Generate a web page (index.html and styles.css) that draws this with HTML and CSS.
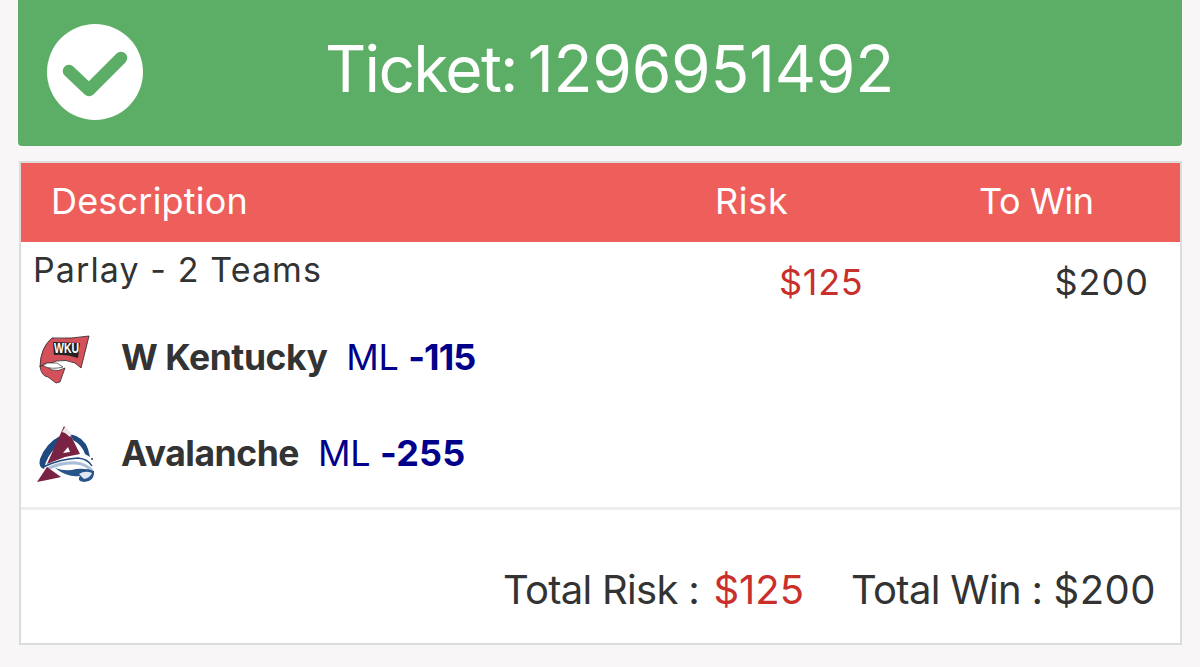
FILE: index.html
```html
<!DOCTYPE html>
<html lang="en">
<head>
<meta charset="utf-8">
<title>Ticket</title>
<link rel="stylesheet" href="styles.css">
</head>
<body>
<main class="page">
  <header class="banner">
    <svg class="check" viewBox="0 0 96 96" width="96" height="96" aria-hidden="true">
      <circle cx="48" cy="48" r="48" fill="#fff"/>
      <path d="M22 47 L42 66 L74 34" fill="none" stroke="#5cae67" stroke-width="12.5" stroke-linejoin="round" stroke-linecap="round"/>
    </svg>
    <h1 class="ticket">Ticket:<span class="num">1296951492</span></h1>
  </header>
  <section class="card">
    <div class="cols head">
      <div class="h-desc">Description</div>
      <div class="h-risk">Risk</div>
      <div class="h-win">To Win</div>
    </div>
    <div class="body">
      <div class="cols parlay">
        <div class="p-name">Parlay - 2 Teams</div>
        <div class="p-risk">$125</div>
        <div class="p-win">$200</div>
      </div>
      <div class="leg leg-wku">
        <svg class="logo logo-wku" viewBox="0 0 64 58" width="64" height="58" aria-hidden="true">
          <path d="M8 36 Q9 46 16 47 L24 53 L28 52 L33 38 Q26 42 20 40 L12 35Z" fill="#d4505a" stroke="#3a2a2a" stroke-width=".8"/>
          <path d="M20 8 Q40 9 57 6 L49 38 L43 33 Q34 29 24 31 L20 33 Q12 32 8 37 Q8 18 20 8Z" fill="#d4505a" stroke="#2a2020" stroke-width=".8"/>
          <path d="M11 36 Q20 40 31 37 L25 33 L15 33Z" fill="#fff" stroke="#333" stroke-width=".7"/>
          <path d="M21 12 L48 13 L46 28 Q34 24 22 25Z" fill="#222"/>
          <text x="22" y="23" textLength="25" lengthAdjust="spacingAndGlyphs" class="wku">WKU</text>
        </svg>
        <span class="team team-wku">W Kentucky</span>
        <span class="ml ml-wku">ML <b>-115</b></span>
      </div>
      <div class="leg leg-avs">
        <svg class="logo" viewBox="0 0 68 68" width="68" height="68" aria-hidden="true">
          <path d="M32 4 L41 12 Q56 15 58 30 L62 40 Q66 50 63 56 Q56 64 46 60 L27 57 L4 62 Q6 52 12 46 Q4 44 8 36 Q14 22 26 15Z" fill="#fff"/>
          <path d="M28 15 Q14 22 8 38 Q6 46 12 48 Q14 36 25 25Z" fill="#1f4a80"/>
          <path d="M38 13 Q52 16 56 28 L58 36 L53 33 Q50 24 41 19Z" fill="#1f4a80"/>
          <path d="M32 5 L38 13 L48 33 L33 36 L15 43Z" fill="#7a2244"/>
          <path d="M33 6 L40 13 L38 16 L33 12 L30 11Z" fill="#e9e6ea"/>
          <path d="M31 32 L36 26 L38 31Z" fill="#fff"/>
          <path d="M11 46 Q28 38 46 37 Q56 38 60 45" fill="none" stroke="#1f4a80" stroke-width="1.5"/>
          <path d="M15 48 Q30 41 44 42 Q54 43 60 50" fill="none" stroke="#a9bfd9" stroke-width="3"/>
          <path d="M5 61 L15 46 L29 56 L20 58Z" fill="#7a2244"/>
          <path d="M23 47 Q34 51 44 48 Q55 47 62 50 Q63 60 52 61 Q44 60 48 55 Q36 57 23 47Z" fill="#28558c"/>
          <path d="M47 53 Q53 49 60 52 Q58 57 52 58Z" fill="#dfe8f2"/>
          <circle cx="60" cy="38" r="1" fill="#334"/>
        </svg>
        <span class="team team-avs">Avalanche</span>
        <span class="ml ml-avs">ML <b>-255</b></span>
      </div>
    </div>
    <footer class="totals">
      <span class="total"><span class="label">Total Risk :</span> <em>$125</em></span>
      <span class="total"><span class="label">Total Win :</span> <span class="win">$200</span></span>
    </footer>
  </section>
</main>
</body>
</html>
```
FILE: styles.css
```css
* { box-sizing: border-box; }
html, body { margin: 0; height: 667px; overflow: hidden; }
body { background: #f8f6f6; font-family: "Inter", "Roboto", "Liberation Sans", sans-serif; color: #333; }
.page { padding: 0 18px; display: flex; flex-direction: column; gap: 15px; }
.banner { height: 146px; background: #5cae67; border-radius: 0 0 4px 4px; display: flex; align-items: center; padding: 0 0 3px 29px; }
.check { flex: none; }
.ticket { margin: 0 0 6px 182px; font-size: 64px; font-weight: 400; color: #fff; line-height: 1; white-space: nowrap; letter-spacing: -1.7px; }
.num { margin-left: 11px; letter-spacing: -.3px; }
.card { height: 484px; margin-left: 1px; border: 2px solid #dcdcdc; background: #fff; display: flex; flex-direction: column; }
.cols { display: grid; grid-template-columns: 680px 1fr 1fr; }
.head { height: 79px; background: #ee5f5b; color: #fff; font-size: 36px; align-items: center; padding: 0 0 4px 30px; letter-spacing: .2px; grid-template-columns: 664px 264px 1fr; }
.h-risk { letter-spacing: .7px; }
.h-win { letter-spacing: -.5px; }
.body { flex: 1; padding: 9px 0 0 12px; border-bottom: 3px solid #eee; }
.parlay { grid-template-columns: 746px 1fr 120px; height: 72px; font-size: 34px; padding-right: 31px; }
.p-name { letter-spacing: 1.1px; line-height: 38px; }
.p-risk { color: #c9302c; padding-top: 12px; line-height: 38px; font-size: 36px; letter-spacing: .7px; }
.p-win { text-align: right; padding-top: 12px; line-height: 38px; font-size: 36px; letter-spacing: 1px; }
.leg { display: flex; align-items: center; height: 88px; white-space: nowrap; }
.logo { flex: none; margin-left: -1px; }
.logo-wku { margin-bottom: 2px; }
.leg-wku { margin-top: -7px; }
.leg-avs { margin-top: 7px; }
.team { font-weight: 700; font-size: 35.5px; letter-spacing: -.45px; padding-bottom: 6px; }
.team-wku { margin-left: 25px; }
.team-avs { margin-left: 21px; padding-bottom: 4px; }
.ml { margin-left: 19px; color: #00008b; font-size: 36px; letter-spacing: -.4px; padding-bottom: 6px; }
.ml-avs { padding-bottom: 4px; }
.ml b { font-weight: 700; }
.ml-wku b { letter-spacing: -.9px; }
.ml-avs b { letter-spacing: .2px; }
.wku { font: 700 14px "Liberation Sans", sans-serif; fill: #fff; }
.totals { height: 133px; display: flex; justify-content: flex-end; align-items: center; gap: 47px; padding: 25px 24px 0 0; font-size: 40px; }
.label { letter-spacing: -.7px; }
.win { letter-spacing: .5px; }
.total em { font-style: normal; color: #c9302c; margin-left: 3px; }
```
